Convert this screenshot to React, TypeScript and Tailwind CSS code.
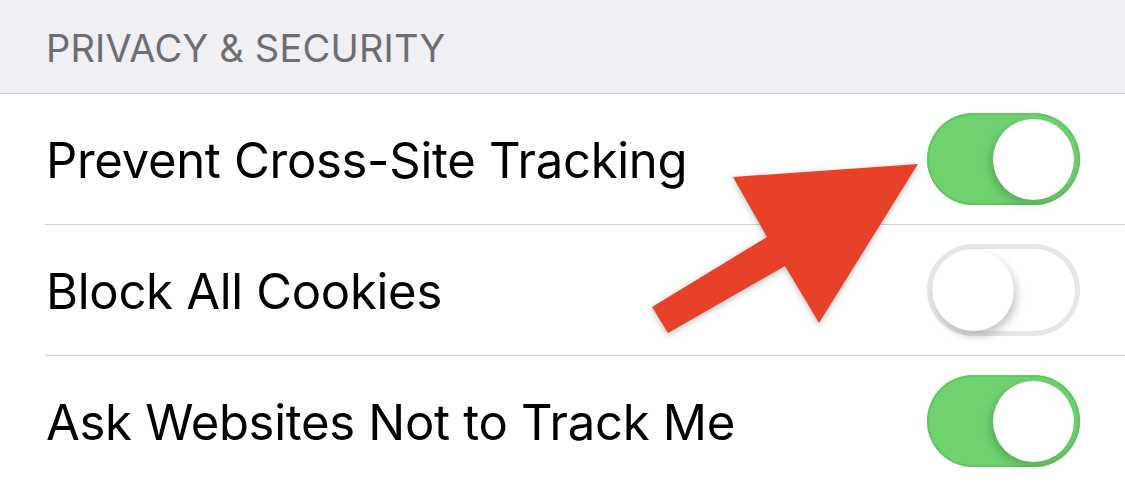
const rows = [
  { label: "Prevent Cross-Site Tracking", on: true },
  { label: "Block All Cookies", on: false },
  { label: "Ask Websites Not to Track Me", on: true },
];

function Toggle({ on }: { on: boolean }) {
  if (on) {
    return (
      <div className="relative h-[92px] w-[153px] rounded-full bg-[#6fd26f] shadow-[inset_0_0_0_2px_#65c466]">
        <div className="absolute right-[6px] top-[6px] h-[81px] w-[81px] rounded-full bg-white shadow-[-3px_4px_8px_rgba(0,0,0,0.18)]"></div>
      </div>
    );
  }
  return (
    <div className="relative h-[92px] w-[153px] rounded-full border-[5px] border-[#e6e6e6] bg-white">
      <div className="absolute left-[1px] top-[1px] h-[81px] w-[81px] rounded-full bg-white shadow-[3px_5px_9px_rgba(0,0,0,0.22)]"></div>
    </div>
  );
}

export default function App() {
  return (
    <div
      className="relative h-[484px] w-[1125px] overflow-hidden bg-white"
      style={{ fontFamily: "Inter, 'Liberation Sans', sans-serif" }}
    >
      <div className="flex h-[94px] items-center border-b border-[#c8c7cc] bg-[#efeff4] pl-[46px] pt-[4px]">
        <span className="text-[38px] tracking-[0.2px] text-[#6d6d72]">
          PRIVACY &amp; SECURITY
        </span>
      </div>
      {rows.map((r) => (
        <div key={r.label} className="flex pl-[45px]">
          <div className="flex h-[131px] flex-1 items-center justify-between border-b border-[#d1d1d6] pr-[45px]">
            <span className="ml-[1px] pt-[3px] text-[49px] tracking-[-0.3px] text-black">
              {r.label}
            </span>
            <Toggle on={r.on} />
          </div>
        </div>
      ))}
      <svg
        className="pointer-events-none absolute left-0 top-0"
        width="1125"
        height="484"
        viewBox="0 0 1125 484"
      >
        <polygon
          points="918,164 733,177 767,237 652,307 668,333 785,266 819,323"
          fill="#e8412a"
          style={{ filter: "drop-shadow(0 2px 3px rgba(0,0,0,0.25))" }}
        />
      </svg>
    </div>
  );
}
